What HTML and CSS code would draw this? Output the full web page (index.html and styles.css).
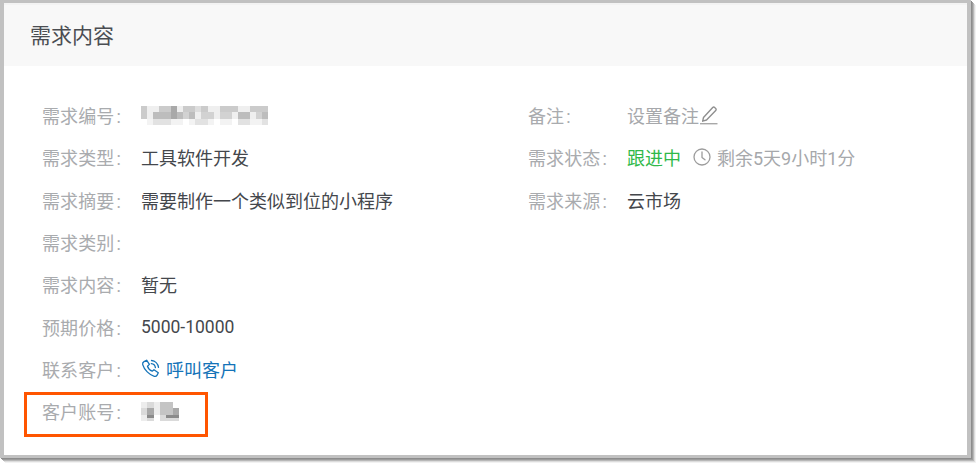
FILE: index.html
```html
<!DOCTYPE html>
<html lang="zh">
<head>
<meta charset="utf-8">
<title>需求内容</title>
<link rel="stylesheet" href="styles.css">
</head>
<body>
<section class="card">
  <header class="card-head">需求内容</header>
  <div class="card-body">
    <div class="col col-left">
      <div class="row"><span class="label">需求编号<i class="colon">:</i></span>
        <svg class="mosaic" width="127" height="19" viewBox="0 0 21 3" preserveAspectRatio="none" shape-rendering="crispEdges">
          <rect width="21" height="1" fill="#dedede"/><rect y="1" width="21" height="1" fill="#d2d2d2"/><rect y="2" width="21" height="1" fill="#f3f3f3"/>
          <path fill="#cbcbcb" d="M0 0h1v2H0zM3 0h2v1H3zM7 0h2v1H7zM10 0h1v1h-1zM13 0h3v1h-3zM18 0h3v1h-3z"/>
          <path fill="#efefef" d="M1 0h2v1H1zM6 0h1v1H6zM11 0h2v1h-2zM16 0h2v1h-2zM1 1h1v1H1zM9 1h1v1H9zM12 1h1v1h-1zM15 1h1v1h-1zM18 1h1v1h-1z"/>
          <path fill="#bdbdbd" d="M2 1h3v1H2zM6 1h1v1H6zM8 1h1v1H8zM16 1h2v1h-2zM20 1h1v1h-1z"/>
          <path fill="#a9a9a9" d="M5 0h1v2H5z"/>
          <path fill="#e2e2e2" d="M2 2h3v1H2zM9 2h2v1H9zM16 2h2v1h-2zM20 2h1v1h-1z"/>
          <path fill="#fff" d="M0 2h1v1H0zM7 2h1v1H7zM12 2h1v1h-1zM15 2h1v1h-1z"/>
        </svg>
      </div>
      <div class="row"><span class="label">需求类型<i class="colon">:</i></span><span class="value">工具软件开发</span></div>
      <div class="row"><span class="label">需求摘要<i class="colon">:</i></span><span class="value">需要制作一个类似到位的小程序</span></div>
      <div class="row"><span class="label">需求类别<i class="colon">:</i></span></div>
      <div class="row"><span class="label">需求内容<i class="colon">:</i></span><span class="value">暂无</span></div>
      <div class="row"><span class="label">预期价格<i class="colon">:</i></span><span class="value price">5000-10000</span></div>
      <div class="row"><span class="label">联系客户<i class="colon">:</i></span>
        <a class="call">
          <svg class="phone-icon" width="19" height="19" viewBox="0 0 19 19" fill="none" stroke="#1473b8" stroke-width="1.3" stroke-linecap="round" stroke-linejoin="round">
            <path d="M3 2.600 5.600 1.200 8.400 5.400 6.500 7.200c.6 2 2.600 4.200 4.700 5l1.800-1.500 4.300 3-1.200 2.500c-.6 1-1.600 1.400-2.800 1.100C8.400 16 3.200 10.800 1.700 5.600 1.400 4.400 1.900 3.200 3 2.600Z"/>
            <path d="M10.500 1.500c3.600.3 6.500 3.100 7 6.800"/>
            <path d="M10.300 4.600c2.100.2 3.800 1.800 4.100 4"/>
          </svg>呼叫客户</a>
      </div>
      <div class="row"><span class="label">客户账号<i class="colon">:</i></span>
        <svg class="mosaic" width="38" height="19" viewBox="0 0 6 3" preserveAspectRatio="none" shape-rendering="crispEdges">
          <rect width="6" height="3" fill="#dadada"/>
          <path fill="#ededed" d="M0 0h1v1H0zM2 0h1v2H2zM0 2h1v1H0z"/>
          <path fill="#a8a8a8" d="M1 1h1v1H1zM5 1h1v1H5z"/>
          <path fill="#c4c4c4" d="M3 0h2v2H3z"/>
          <path fill="#fff" d="M2 2h1v1H2zM5 0h1v1H5z"/>
          <path fill="#8a8a8a" d="M1 2h1v.5H1zM4 2h2v.5H4z"/>
        </svg>
      </div>
      <div class="highlight"></div>
    </div>
    <div class="col col-right">
      <div class="row"><span class="label">备注<i class="colon">:</i></span><span class="muted">设置备注</span>
        <svg class="edit-icon" width="20" height="20" viewBox="0 0 20 20" fill="none" stroke="#8f8f8f" stroke-width="1.4" stroke-linejoin="round">
          <path d="M4.500 12.500 13.700 2.500c.6-.6 1.400-.6 2 0l1 .9c.6.600.6 1.400 0 2L7.500 15l-3.800 1.200Z"/>
          <path d="M1 18.700h17.500" stroke="#a8a8a8"/>
        </svg>
      </div>
      <div class="row"><span class="label">需求状态<i class="colon">:</i></span><span class="status">跟进中</span>
        <svg class="clock-icon" width="18" height="18" viewBox="0 0 18 18" fill="none" stroke="#9c9c9c" stroke-width="1.300" stroke-linecap="round" stroke-linejoin="round">
          <circle cx="9" cy="9" r="8"/><path d="M9 4v5.400l3 2.400"/>
        </svg>
        <span class="muted">剩余5天9小时1分</span>
      </div>
      <div class="row"><span class="label">需求来源<i class="colon">:</i></span><span class="value">云市场</span></div>
    </div>
  </div>
</section>
</body>
</html>
```

FILE: styles.css
```css
* { box-sizing: border-box; }
html, body { margin: 0; padding: 0; background: #fff; }
body {
  width: 980px;
  height: 468px;
  overflow: hidden;
  font-family: Roboto, "Noto Sans CJK SC", sans-serif;
  font-size: 18px;
  color: #3c3f44;
}
.card {
  width: 971px;
  height: 458px;
  border-style: solid;
  border-color: #c1c1c1;
  border-width: 3px 4px 3px 4px;
  box-shadow: 1px 1px 0 #8c8c8c, 2px 2px 0 #9c9c9c, 3px 3px 0 #b8b8b8, 4px 4px 0 #dcdcdc, 5px 5px 0 #f2f2f2;
  background: #fff;
}
.card-head {
  height: 63px;
  padding: 16px 0 0 26px;
  background: #f8f8f8;
  border-top: 2px solid #f3f3f3;
  font-size: 21px;
  line-height: 30px;
  color: #4a4d52;
}
.card-body {
  display: flex;
  padding: 28px 0 0 38px;
}
.col { position: relative; }
.col-left { width: 486px; }
.col-right { flex: 1; }
.row {
  display: flex;
  align-items: center;
  height: 42.300px;
}
.label { width: 99px; color: #a9abae; white-space: nowrap; flex: none; letter-spacing: 0.1px; }
.colon { font-style: normal; margin-left: 2px; }
.value { color: #44474c; white-space: nowrap; }
.price { font-size: 17.500px; }
.muted { color: #a6a8ab; white-space: nowrap; }
.status { color: #30b94a; white-space: nowrap; }
.call { display: flex; align-items: center; color: #1473b8; white-space: nowrap; }
.phone-icon { margin-right: 6px; }
.edit-icon { margin-left: 0; }
.clock-icon { margin: 0 6px 0 12px; }
.mosaic { display: block; }
.highlight {
  position: absolute;
  left: -18px;
  top: 298px;
  width: 184px;
  height: 45px;
  border: 3px solid #ff5500;
}
```
